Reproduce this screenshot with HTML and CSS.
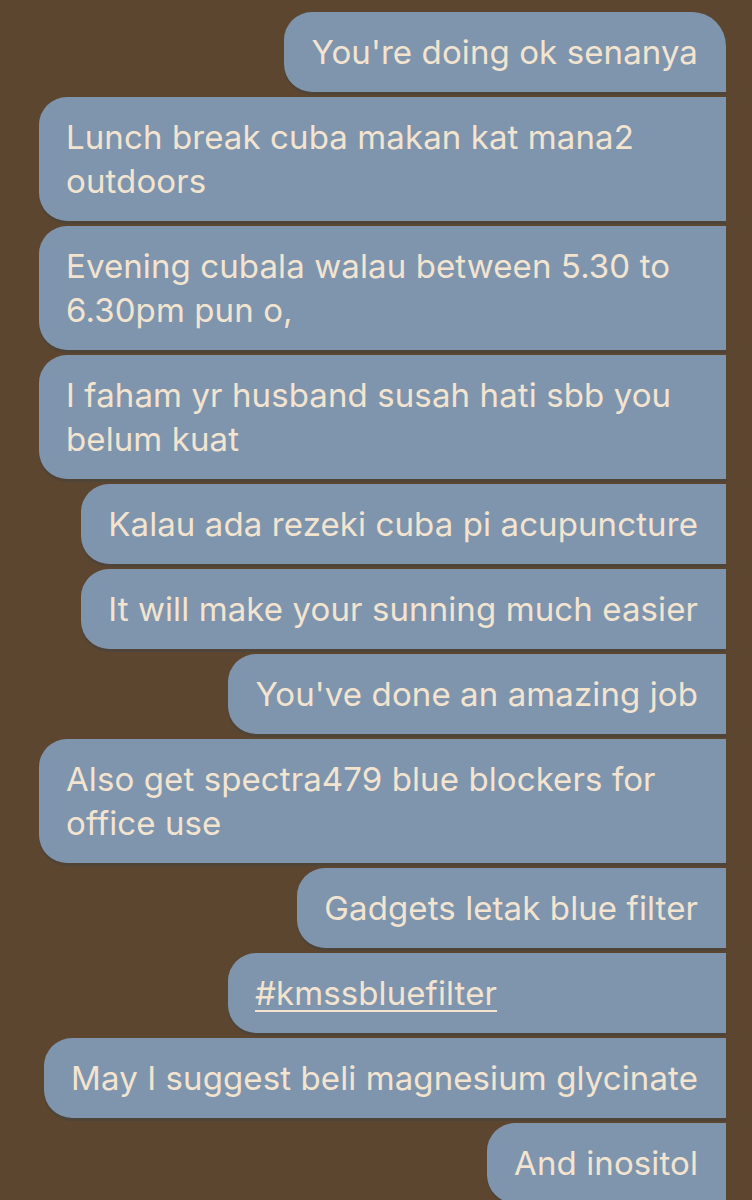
FILE: index.html
```html
<!DOCTYPE html>
<html>
<head>
<meta charset="utf-8">
<link rel="stylesheet" href="styles.css">
</head>
<body>
<div class="thread">
  <div class="bubble first">You're doing ok senanya</div>
  <div class="bubble">Lunch break cuba makan kat mana2 outdoors</div>
  <div class="bubble">Evening cubala walau between 5.30 to 6.30pm pun o,</div>
  <div class="bubble">I faham yr husband susah hati sbb you belum kuat</div>
  <div class="bubble">Kalau ada rezeki cuba pi acupuncture</div>
  <div class="bubble">It will make your sunning much easier</div>
  <div class="bubble">You've done an amazing job</div>
  <div class="bubble">Also get spectra479 blue blockers for office use</div>
  <div class="bubble">Gadgets letak blue filter</div>
  <div class="bubble link"><span class="tag">#kmssbluefilter</span></div>
  <div class="bubble">May I suggest beli magnesium glycinate</div>
  <div class="bubble">And inositol</div>
</div>
</body>
</html>
```

FILE: styles.css
```css
html, body {
  margin: 0;
  padding: 0;
  background: #5c4630;
}
body {
  width: 752px;
  height: 1200px;
  overflow: hidden;
  font-family: Inter, "Noto Sans", sans-serif;
}
.thread {
  display: flex;
  flex-direction: column;
  align-items: flex-end;
  gap: 5px;
  padding: 12px 26px 0 0;
}
.bubble {
  box-sizing: border-box;
  max-width: 687px;
  padding: 18px 28px 18px 27px;
  background: #7f95ae;
  color: #f3e4d0;
  font-size: 33px;
  line-height: 44px;
  letter-spacing: 0.1px;
  border-radius: 28px 0 0 28px;
  box-shadow: 0 3px 0 #4f4438;
}
.bubble.first {
  border-top-right-radius: 34px;
}
.bubble.link {
  width: 498px;
}
.tag {
  text-decoration: underline;
  text-decoration-thickness: 2px;
  text-underline-offset: 5px;
}
```
